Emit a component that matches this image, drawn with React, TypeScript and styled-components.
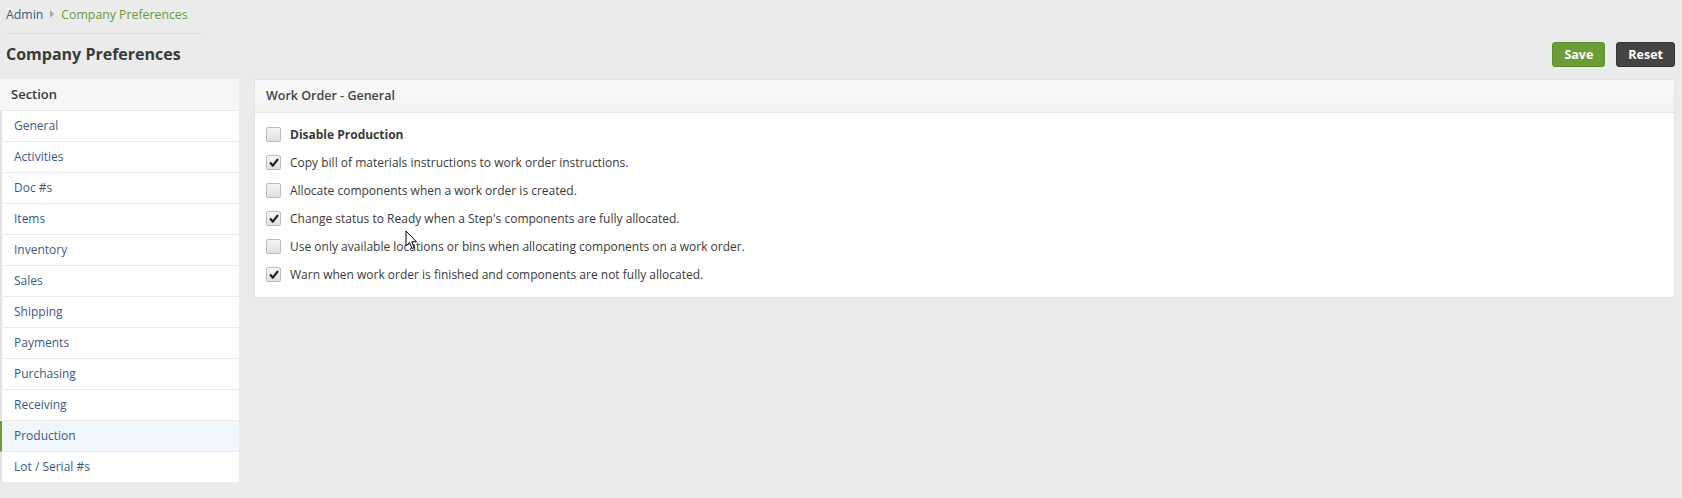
import React, { FC } from "react";
import styled, { createGlobalStyle } from "styled-components";

const GlobalStyle = createGlobalStyle`
  html, body {
    margin: 0;
    padding: 0;
    background-color: #ebebeb;
    font-family: "Open Sans", "Noto Sans", sans-serif;
    font-size: 12px;
    color: #333;
  }
`;

const Page = styled.div`
  position: relative;
  min-height: 498px;
`;

const Header = styled.div`
  padding: 0 7px 0 6px;
`;

const Breadcrumb = styled.div`
  display: flex;
  align-items: center;
  gap: 7px;
  width: 196px;
  height: 28px;
  padding-bottom: 5px;
  border-bottom: 1px solid #dcdcdc;
`;

const Crumb = styled.span<{ $current?: boolean }>`
  color: ${p => (p.$current ? "#6c9a36" : "#3b5a86")};
  font-size: 12.3px;
`;

const CrumbArrow = styled.span`
  width: 0;
  height: 0;
  border-top: 4px solid transparent;
  border-bottom: 4px solid transparent;
  border-left: 4px solid #aaa;
`;

const TitleRow = styled.div`
  display: flex;
  align-items: center;
  justify-content: space-between;
  height: 40px;
`;

const Title = styled.h1`
  margin: 0;
  font-size: 16px;
  font-weight: 700;
  color: #3a3a3a;
`;

const Actions = styled.div`
  display: flex;
  gap: 11px;
`;

const Button = styled.button<{ $variant: "save" | "reset" }>`
  height: 25px;
  padding: 0 11px;
  border-radius: 3px;
  border: 1px solid ${p => (p.$variant === "save" ? "#5d8d2c" : "#333")};
  background-color: ${p => (p.$variant === "save" ? "#6b9c36" : "#444")};
  color: #fff;
  font-family: inherit;
  font-size: 12.5px;
  font-weight: 700;
  cursor: pointer;
`;

const Content = styled.div`
  display: flex;
  align-items: flex-start;
  gap: 15px;
  padding-right: 7px;
  margin-top: 5px;
`;

const Sidebar = styled.nav`
  width: 239px;
  flex: 0 0 239px;
  background-color: #fff;
`;

const SidebarHeader = styled.div`
  height: 31px;
  line-height: 31px;
  padding-left: 11px;
  background-color: #f6f6f6;
  border-bottom: 1px solid #e6e6e6;
  font-size: 13px;
  font-weight: 600;
  color: #3a3a3a;
`;

const SidebarItem = styled.a<{ $active?: boolean }>`
  display: block;
  height: 30px;
  line-height: 29px;
  padding-left: 12px;
  border-left: 2px solid ${p => (p.$active ? "#6b9c36" : "#e3e3e3")};
  border-bottom: 1px solid #ebebeb;
  background-color: ${p => (p.$active ? "#f1f5fc" : "#fff")};
  color: #3b5a86;
  text-decoration: none;
  font-size: 12px;
`;

const Panel = styled.section`
  flex: 1;
  background-color: #fff;
  border: 1px solid #e4e4e4;
`;

const PanelHeader = styled.div`
  height: 32px;
  line-height: 32px;
  padding-left: 11px;
  background: linear-gradient(#f9f9f9, #f4f4f4);
  border-bottom: 1px solid #e6e6e6;
  font-size: 12.5px;
  font-weight: 600;
  color: #444;
`;

const PanelBody = styled.div`
  padding: 7px 11px 9px;
`;

const OptionRow = styled.label`
  display: flex;
  align-items: center;
  gap: 9px;
  height: 28px;
  cursor: pointer;
`;

const Box = styled.span`
  display: flex;
  align-items: center;
  justify-content: center;
  width: 13px;
  height: 13px;
  border: 1px solid #bcbcbc;
  border-radius: 2px;
  background: linear-gradient(#f4f4f4, #e0e0e0);
`;

const OptionText = styled.span<{ $bold?: boolean }>`
  font-size: 12px;
  font-weight: ${p => (p.$bold ? 700 : 400)};
  color: #3a3a3a;
`;

const Pointer = styled.svg`
  position: absolute;
  left: 405px;
  top: 230px;
  pointer-events: none;
`;

const sections = [
  "General",
  "Activities",
  "Doc #s",
  "Items",
  "Inventory",
  "Sales",
  "Shipping",
  "Payments",
  "Purchasing",
  "Receiving",
  "Production",
  "Lot / Serial #s",
];

const options = [
  { text: "Disable Production", checked: false, bold: true },
  { text: "Copy bill of materials instructions to work order instructions.", checked: true },
  { text: "Allocate components when a work order is created.", checked: false },
  { text: "Change status to Ready when a Step's components are fully allocated.", checked: true },
  { text: "Use only available locations or bins when allocating components on a work order.", checked: false },
  { text: "Warn when work order is finished and components are not fully allocated.", checked: true },
];

const Checkbox: FC<{ checked: boolean }> = ({ checked }) => (
  <Box>
    {checked && (
      <svg width="10" height="9" viewBox="0 0 10 9">
        <path d="M1 4.6 L3.8 7.6 L9 1" fill="none" stroke="#222" strokeWidth="2.2" />
      </svg>
    )}
  </Box>
);

const App: FC = () => (
  <Page>
    <GlobalStyle />
    <Header>
      <Breadcrumb>
        <Crumb>Admin</Crumb>
        <CrumbArrow />
        <Crumb $current>Company Preferences</Crumb>
      </Breadcrumb>
      <TitleRow>
        <Title>Company Preferences</Title>
        <Actions>
          <Button $variant="save">Save</Button>
          <Button $variant="reset">Reset</Button>
        </Actions>
      </TitleRow>
    </Header>
    <Content>
      <Sidebar>
        <SidebarHeader>Section</SidebarHeader>
        {sections.map(s => (
          <SidebarItem key={s} $active={s === "Production"}>
            {s}
          </SidebarItem>
        ))}
      </Sidebar>
      <Panel>
        <PanelHeader>Work Order - General</PanelHeader>
        <PanelBody>
          {options.map(o => (
            <OptionRow key={o.text}>
              <Checkbox checked={o.checked} />
              <OptionText $bold={o.bold}>{o.text}</OptionText>
            </OptionRow>
          ))}
        </PanelBody>
      </Panel>
    </Content>
    <Pointer width="13" height="20" viewBox="0 0 13 20">
      <path d="M1 1 L1 16 L4.5 12.5 L7 18.5 L9.2 17.6 L6.8 11.8 L11.5 11.8 Z" fill="#fff" stroke="#000" strokeWidth="1" />
    </Pointer>
  </Page>
);

export default App;
